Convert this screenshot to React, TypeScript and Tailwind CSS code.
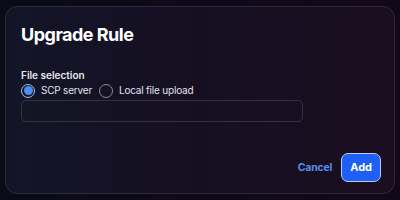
import React from "react";

export default function App() {
  const [source, setSource] = React.useState<"scp" | "local">("scp");

  return (
    <div className="w-[400px] h-[200px] bg-gradient-to-r from-[#0a0b17] to-[#130818] px-[5px] pt-[6px] pb-[6px] font-['Inter',_'Liberation_Sans',_sans-serif]">
      <div className="h-full rounded-[12px] border border-[#2c2a3c] bg-gradient-to-r from-[#131527] via-[#160f22] to-[#1b0e20] flex flex-col pl-[15px] pr-[13px] pt-[19px] pb-[11px]">
        <h2 className="text-[18px] font-bold text-white leading-none tracking-[-0.5px]">Upgrade Rule</h2>

        {/* File selection */}
        <div className="mt-[26px] flex flex-col">
          <span className="text-[10px] font-semibold text-[#e6e6ee] leading-none">File selection</span>
          <div className="mt-[3px] flex items-center gap-[7px] text-[10px] text-[#e2e2ea] tracking-[-0.2px]">
            <button onClick={() => setSource("scp")} className="flex items-center gap-[6px]">
              <span className="w-[14px] h-[14px] rounded-full border-[1.5px] border-[#9ec4f6] flex items-center justify-center">
                {source === "scp" && <span className="w-[9px] h-[9px] rounded-full bg-[#4a8ef0]" />}
              </span>
              SCP server
            </button>
            <button onClick={() => setSource("local")} className="flex items-center gap-[6px]">
              <span className="w-[14px] h-[14px] rounded-full border-[1.5px] border-[#8a8a98] flex items-center justify-center">
                {source === "local" && <span className="w-[9px] h-[9px] rounded-full bg-[#4a8ef0]" />}
              </span>
              Local file upload
            </button>
          </div>
          <input className="mt-[2px] w-[282px] h-[22px] rounded-[5px] border border-[#34323f] bg-transparent outline-none text-white text-[11px] px-2" />
        </div>

        {/* Actions */}
        <div className="mt-auto flex items-center justify-end gap-[9px]">
          <button className="text-[10.5px] font-bold text-[#4f8ee8] tracking-[-0.2px]">Cancel</button>
          <button className="h-[29px] px-[8px] rounded-[7px] bg-[#1f5ff5] border-[1.5px] border-[#b6cdfa] text-white text-[11px] font-bold">Add</button>
        </div>
      </div>
    </div>
  );
}
